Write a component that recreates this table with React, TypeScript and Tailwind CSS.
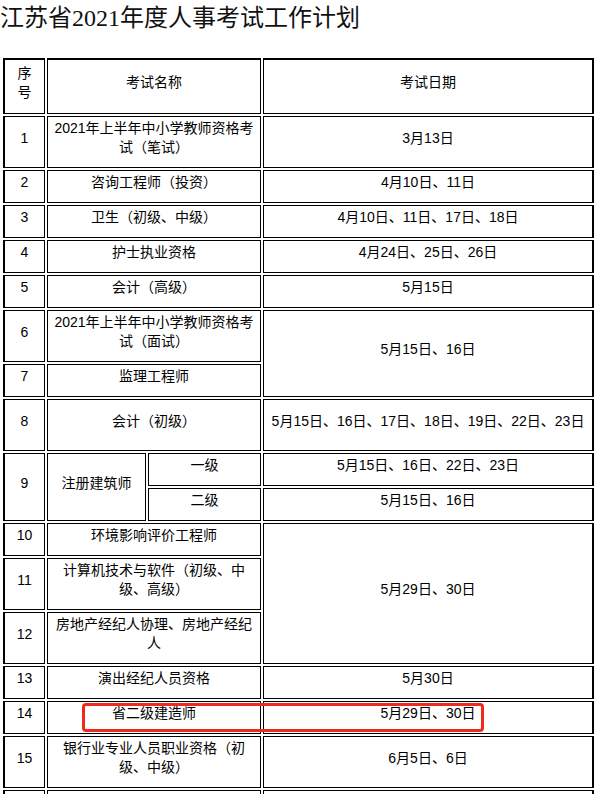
const cell = "border border-black text-center align-middle px-0 pt-0 pb-[8px] whitespace-nowrap";
const first = `${cell} border-l-2`;
const last = `${cell} border-r-2`;

type Row = {
  no: string;
  name: React.ReactNode;
  date?: React.ReactNode;
  dateSpan?: number;
  tall?: boolean;
};

const rowsTop: Row[] = [
  { no: "1", name: <>2021年上半年中小学教师资格考<br />试（笔试）</>, date: "3月13日", tall: true },
  { no: "2", name: "咨询工程师（投资）", date: "4月10日、11日" },
  { no: "3", name: "卫生（初级、中级）", date: "4月10日、11日、17日、18日" },
  { no: "4", name: "护士执业资格", date: "4月24日、25日、26日" },
  { no: "5", name: "会计（高级）", date: "5月15日" },
  { no: "6", name: <>2021年上半年中小学教师资格考<br />试（面试）</>, date: "5月15日、16日", dateSpan: 2, tall: true },
  { no: "7", name: "监理工程师" },
  { no: "8", name: "会计（初级）", date: "5月15日、16日、17日、18日、19日、22日、23日", tall: true },
];

const rowsBottom: Row[] = [
  { no: "10", name: "环境影响评价工程师", date: "5月29日、30日", dateSpan: 3 },
  { no: "11", name: <>计算机技术与软件（初级、中<br />级、高级）</>, tall: true },
  { no: "12", name: <>房地产经纪人协理、房地产经纪<br />人</>, tall: true },
  { no: "13", name: "演出经纪人员资格", date: "5月30日" },
  { no: "14", name: "省二级建造师", date: "5月29日、30日" },
  { no: "15", name: <>银行业专业人员职业资格（初<br />级、中级）</>, date: "6月5日、6日", tall: true },
];

function PlanRow({ row }: { row: Row }) {
  return (
    <tr className={row.tall ? "h-[52px]" : "h-[33px]"}>
      <td className={first}>{row.no}</td>
      <td className={cell} colSpan={2}>
        {row.name}
      </td>
      {row.date !== undefined && (
        <td className={last} rowSpan={row.dateSpan ?? 1}>
          {row.date}
        </td>
      )}
    </tr>
  );
}

export default function App() {
  return (
    <div className="relative w-[599px] bg-white text-black">
      <h1 className="text-[24px] leading-[36px] mb-[20px] font-normal text-[#111] font-['Liberation_Serif','Noto_Sans_CJK_SC',serif]">
        江苏省2021年度人事考试工作计划
      </h1>

      <table className="ml-[1px] w-[595px] table-fixed border-separate border-spacing-[2px] text-[14px] leading-[19px] font-['Liberation_Sans','Noto_Sans_CJK_SC',sans-serif]">
        <colgroup>
          <col className="w-[42px]" />
          <col className="w-[99px]" />
          <col className="w-[113px]" />
          <col className="w-[331px]" />
        </colgroup>
        <tbody>
          <tr className="h-[56px]">
            <td className={`${first} border-t-2`}>
              序<br />号
            </td>
            <td className={`${cell} border-t-2`} colSpan={2}>
              考试名称
            </td>
            <td className={`${last} border-t-2`}>考试日期</td>
          </tr>

          {rowsTop.map((r) => (
            <PlanRow key={r.no} row={r} />
          ))}

          {/* 注册建筑师 splits into two levels */}
          <tr className="h-[33px]">
            <td className={first} rowSpan={2}>9</td>
            <td className={cell} rowSpan={2}>注册建筑师</td>
            <td className={cell}>一级</td>
            <td className={last}>5月15日、16日、22日、23日</td>
          </tr>
          <tr className="h-[33px]">
            <td className={cell}>二级</td>
            <td className={last}>5月15日、16日</td>
          </tr>

          {rowsBottom.map((r) => (
            <PlanRow key={r.no} row={r} />
          ))}

          <tr className="h-[33px]">
            <td className={first}>&nbsp;</td>
            <td className={cell} colSpan={2}>&nbsp;</td>
            <td className={last}>&nbsp;</td>
          </tr>
        </tbody>
      </table>

      {/* highlight around row 14 */}
      <div className="absolute left-[82px] top-[703px] w-[402px] h-[29px] border-[3px] border-[#ee2a1f] rounded-[4px] pointer-events-none" />
    </div>
  );
}
